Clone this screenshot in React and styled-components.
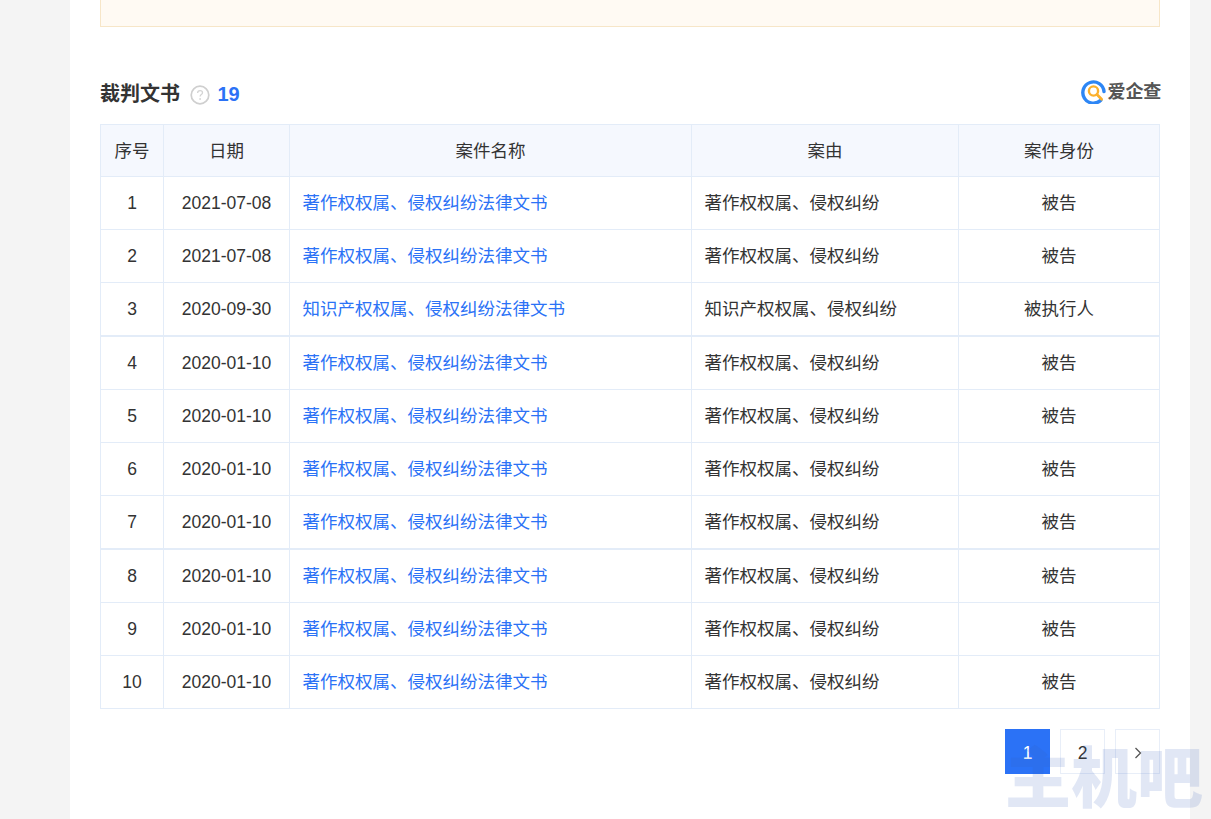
import React from "react";
import styled, { createGlobalStyle } from "styled-components";

const Global = createGlobalStyle`
  html, body { margin: 0; padding: 0; height: 819px; overflow: hidden; background: #f4f4f4; }
  body { font-family: "Liberation Sans", "Noto Sans CJK SC", Arial, sans-serif; color: #333; }
`;
const Page = styled.div`
  position: relative;
  height: 819px;
  overflow: hidden;
  padding-left: 70px;
  padding-right: 21px;
`;
const Card = styled.main`
  background: #fff;
  height: 819px;
  padding: 0 30px;
`;
const Notice = styled.div`
  height: 26px;
  background: #fffaf3;
  border: 1px solid #f7e6c8;
  border-top: 0;
`;
const SectionHead = styled.header`
  display: flex;
  align-items: center;
  height: 40px;
  margin-top: 47px;
  margin-bottom: 10px;
`;
const Title = styled.h2`
  margin: 0;
  font-size: 20px;
  line-height: 28px;
  font-weight: 700;
  color: #333;
`;
const Help = styled.span`
  display: inline-flex;
  margin-left: 9.5px;
  margin-top: 2px;
`;
const Count = styled.span`
  margin-left: 8px;
  font-size: 20px;
  font-weight: 700;
  color: #2b72f6;
`;
const Brand = styled.div`
  margin-left: auto;
  display: flex;
  align-items: center;
  margin-top: -5px;
  margin-right: -1px;
`;
const BrandName = styled.span`
  font-size: 18px;
  line-height: 24px;
  font-weight: 700;
  color: #555;
  margin-left: 2px;
  letter-spacing: -0.2px;
`;
const Table = styled.table`
  width: 1059px;
  table-layout: fixed;
  border-collapse: collapse;
  font-size: 17.5px;
  color: #333;
`;
const Th = styled.th`
  height: 48px;
  padding: 0 0 3px;
  font-weight: 400;
  background: #f5f8fe;
  border: 1px solid #e3ecf8;
  text-align: center;
`;
const Td = styled.td`
  height: 38.5px;
  padding: 13.5px ${(p) => (p.$left ? "12.5px" : "0")} 0;
  line-height: 24px;
  vertical-align: top;
  border: 1px solid #e3ecf8;
  border-bottom-width: ${(p) => (p.$seam ? "2px" : "1px")};
  text-align: ${(p) => (p.$left ? "left" : "center")};
  white-space: nowrap;
`;
const CaseLink = styled.a`
  color: #2b72f6;
  text-decoration: none;
`;
const Pager = styled.nav`
  display: flex;
  justify-content: flex-end;
  gap: 10px;
  margin-top: 20px;
`;
const PageBtn = styled.button`
  width: 45px;
  height: 45px;
  padding: 3px 0 0;
  display: flex;
  align-items: center;
  justify-content: center;
  font: 400 17.5px "Liberation Sans", Arial, sans-serif;
  color: ${(p) => (p.$active ? "#fff" : "#333")};
  background: ${(p) => (p.$active ? "#2b72f6" : "#fff")};
  border: 1px solid ${(p) => (p.$active ? "#2b72f6" : "#e8eef8")};
`;
const Watermark = styled.div`
  position: absolute;
  left: 1005px;
  top: 728px;
  font-family: "Noto Sans CJK SC", sans-serif;
  font-size: 66px;
  line-height: 90px;
  font-weight: 900;
  white-space: nowrap;
  color: rgba(55, 95, 185, 0.15);
  pointer-events: none;
`;

const long1 = "著作权权属、侵权纠纷";
const rows = [
  ["2021-07-08", long1 + "法律文书", long1, "被告"],
  ["2021-07-08", long1 + "法律文书", long1, "被告"],
  ["2020-09-30", "知识产权权属、侵权纠纷法律文书", "知识产权权属、侵权纠纷", "被执行人", true],
  ["2020-01-10", long1 + "法律文书", long1, "被告"],
  ["2020-01-10", long1 + "法律文书", long1, "被告"],
  ["2020-01-10", long1 + "法律文书", long1, "被告"],
  ["2020-01-10", long1 + "法律文书", long1, "被告", true],
  ["2020-01-10", long1 + "法律文书", long1, "被告"],
  ["2020-01-10", long1 + "法律文书", long1, "被告"],
  ["2020-01-10", long1 + "法律文书", long1, "被告"],
];

const HelpIcon = () => (
  <svg width="20" height="20" viewBox="0 0 20 20" fill="none">
    <circle cx="10" cy="10" r="8.8" stroke="#cfcfcf" strokeWidth="1.7" />
    <path d="M7.6 8c0-1.5 1.1-2.4 2.5-2.4s2.4.9 2.4 2.1c0 1.9-2.4 1.9-2.4 3.8" stroke="#d4d4d4" strokeWidth="1.3" />
    <circle cx="10.1" cy="14" r="0.9" fill="#d4d4d4" />
  </svg>
);

const BrandIcon = () => (
  <svg width="25" height="25" viewBox="0 0 25 25" fill="none">
    <path d="M19.8 21.2A10.6 10.6 0 1 1 23 12.5" stroke="#2d86f5" strokeWidth="3.4" strokeLinecap="round" />
    <circle cx="12.5" cy="12" r="4.6" stroke="#fbb02c" strokeWidth="2.4" />
    <path d="M16 15.6l4.6 4.6" stroke="#fbb02c" strokeWidth="2.8" strokeLinecap="round" />
  </svg>
);

export default function App() {
  return (
    <Page>
      <Global />
      <Card>
        <Notice />
        <SectionHead>
          <Title>裁判文书</Title>
          <Help><HelpIcon /></Help>
          <Count>19</Count>
          <Brand>
            <BrandIcon />
            <BrandName>爱企查</BrandName>
          </Brand>
        </SectionHead>
        <Table>
          <colgroup>
            <col width="63" />
            <col width="126" />
            <col width="402" />
            <col width="267" />
            <col width="201" />
          </colgroup>
          <thead>
            <tr>
              <Th>序号</Th>
              <Th>日期</Th>
              <Th>案件名称</Th>
              <Th>案由</Th>
              <Th>案件身份</Th>
            </tr>
          </thead>
          <tbody>
            {rows.map((r, i) => (
              <tr key={i}>
                <Td $seam={r[4]}>{i + 1}</Td>
                <Td $seam={r[4]}>{r[0]}</Td>
                <Td $seam={r[4]} $left><CaseLink href="#">{r[1]}</CaseLink></Td>
                <Td $seam={r[4]} $left>{r[2]}</Td>
                <Td $seam={r[4]}>{r[3]}</Td>
              </tr>
            ))}
          </tbody>
        </Table>
        <Pager>
          <PageBtn $active>1</PageBtn>
          <PageBtn>2</PageBtn>
          <PageBtn aria-label="next">
            <svg width="12" height="14" viewBox="0 0 12 14" fill="none">
              <path d="M3.5 2l5 5-5 5" stroke="#555" strokeWidth="1.3" />
            </svg>
          </PageBtn>
        </Pager>
      </Card>
      <Watermark>主机吧</Watermark>
    </Page>
  );
}
